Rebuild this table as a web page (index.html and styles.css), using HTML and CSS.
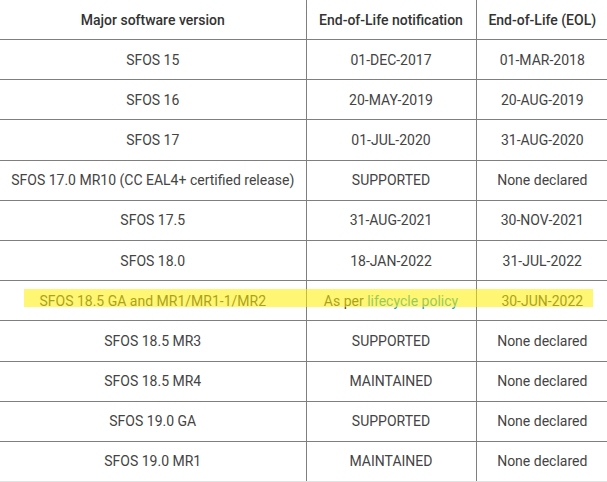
FILE: index.html
```html
<!DOCTYPE html>
<html>
<head>
<meta charset="utf-8">
<link rel="stylesheet" href="styles.css">
</head>
<body>
<div class="wrap">
<table class="eol">
  <colgroup>
    <col class="c1"><col class="c2"><col class="c3">
  </colgroup>
  <thead>
    <tr><th>Major software version</th><th>End-of-Life notification</th><th>End-of-Life (EOL)</th></tr>
  </thead>
  <tbody>
    <tr><td>SFOS 15</td><td>01-DEC-2017</td><td>01-MAR-2018</td></tr>
    <tr><td>SFOS 16</td><td>20-MAY-2019</td><td>20-AUG-2019</td></tr>
    <tr><td>SFOS 17</td><td>01-JUL-2020</td><td>31-AUG-2020</td></tr>
    <tr><td>SFOS 17.0 MR10 (CC EAL4+ certified release)</td><td>SUPPORTED</td><td>None declared</td></tr>
    <tr><td>SFOS 17.5</td><td>31-AUG-2021</td><td>30-NOV-2021</td></tr>
    <tr><td>SFOS 18.0</td><td>18-JAN-2022</td><td>31-JUL-2022</td></tr>
    <tr class="hl"><td>SFOS 18.5 GA and MR1/MR1-1/MR2</td><td>As per <a href="#" class="link">lifecycle policy</a></td><td>30-JUN-2022</td></tr>
    <tr><td>SFOS 18.5 MR3</td><td>SUPPORTED</td><td>None declared</td></tr>
    <tr><td>SFOS 18.5 MR4</td><td>MAINTAINED</td><td>None declared</td></tr>
    <tr><td>SFOS 19.0 GA</td><td>SUPPORTED</td><td>None declared</td></tr>
    <tr class="last"><td>SFOS 19.0 MR1</td><td>MAINTAINED</td><td>None declared</td></tr>
  </tbody>
</table>
<div class="mark"></div>
<div class="foot"></div>
</div>
</body>
</html>
```

FILE: styles.css
```css
html, body {
  margin: 0;
  padding: 0;
  background: #fff;
}
.wrap {
  position: relative;
  width: 607px;
  height: 482px;
  overflow: hidden;
}
.eol {
  width: 608px;
  border-collapse: collapse;
  table-layout: fixed;
  font-family: Roboto, "Liberation Sans", sans-serif;
  font-size: 14px;
  color: #444;
}
.c1 { width: 306px; }
.c2 { width: 170px; }
.c3 { width: 132px; }
.eol th, .eol td {
  text-align: center;
  vertical-align: middle;
  border-left: 1px solid #7f7f7f;
  border-bottom: 1px solid #7f7f7f;
  padding: 0 4px;
  white-space: nowrap;
}
.eol th:first-child, .eol td:first-child {
  border-left: none;
}
.eol th {
  height: 39px;
  font-weight: 500;
  color: #333;
}
.eol td {
  height: 39.2px;
}
.eol tr.last td {
  border-bottom: none;
}
.link {
  color: #1a9bc9;
  text-decoration: none;
}
.mark {
  position: absolute;
  left: 24px;
  top: 289px;
  width: 569px;
  height: 18px;
  background: rgba(255, 238, 0, 0.55);
  pointer-events: none;
}
.foot {
  position: absolute;
  left: 0;
  top: 481px;
  width: 607px;
  border-top: 1px solid #e2e2e2;
}
```
